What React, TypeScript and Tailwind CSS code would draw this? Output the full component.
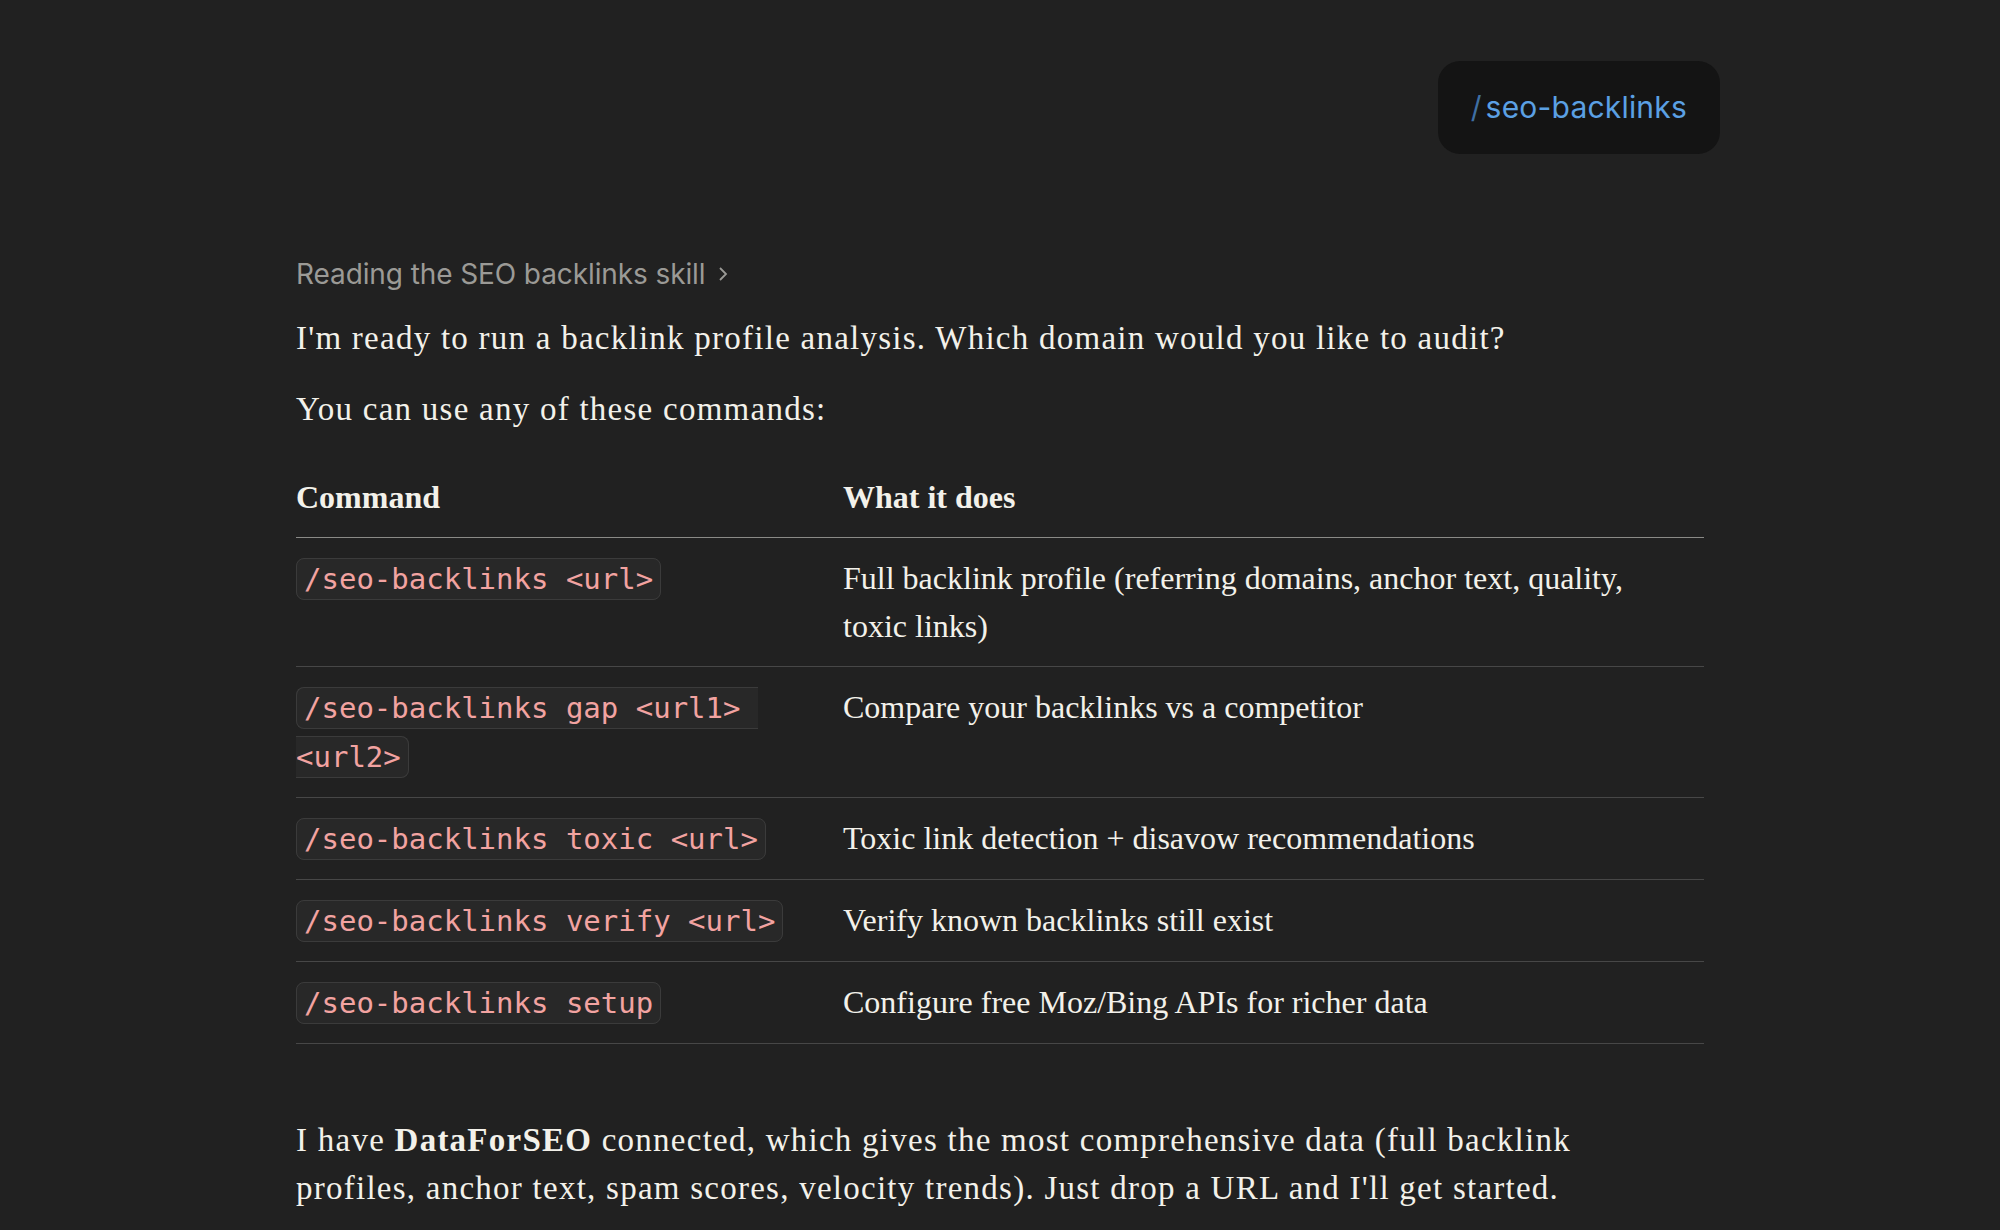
import React from "react";

const serif = { fontFamily: '"Liberation Serif", "Times New Roman", serif' };

function Code({ children }: { children: React.ReactNode }) {
  return (
    <code className="whitespace-pre-wrap rounded-[8px] border border-[#3b3b3b] bg-[#282828] px-[7px] py-[3px] font-['DejaVu_Sans_Mono',monospace] text-[29px] tracking-[0px] text-[#f2a3a1]">
      {children}
    </code>
  );
}

const rows: { cmd: string; desc: string }[] = [
  { cmd: "/seo-backlinks <url>", desc: "Full backlink profile (referring domains, anchor text, quality, toxic links)" },
  { cmd: "/seo-backlinks gap <url1> <url2>", desc: "Compare your backlinks vs a competitor" },
  { cmd: "/seo-backlinks toxic <url>", desc: "Toxic link detection + disavow recommendations" },
  { cmd: "/seo-backlinks verify <url>", desc: "Verify known backlinks still exist" },
  { cmd: "/seo-backlinks setup", desc: "Configure free Moz/Bing APIs for richer data" },
];

export default function App() {
  return (
    <div className="min-h-[1230px] w-full bg-[#212121] text-[#f3f1ea]">
      <div className="mx-auto w-[1408px] pt-[61px]">
        <div className="flex justify-end">
          <div className="mr-[-16px] flex h-[93px] items-center rounded-[22px] bg-[#141414] px-[33px] font-['Inter',sans-serif] text-[30px] text-[#5ba0e4]">
            <span className="mr-[4px] text-[#3f6fa3]">/</span>
            <span className="tracking-[0.2px]">seo-backlinks</span>
          </div>
        </div>

        <div className="mt-[100px] flex items-center gap-[11px] font-['Inter',sans-serif] text-[28px] leading-[40px] text-[#9b9a96]">
          <span className="tracking-[-0.1px]">Reading the SEO backlinks skill</span>
          <svg width="14" height="18" viewBox="0 0 14 18" fill="none" stroke="#9b9a96" strokeWidth="1.8">
            <path d="M4 3l6 6-6 6" />
          </svg>
        </div>

        <div style={serif} className="text-[33px] leading-[48px]">
          <p className="mt-[20px] tracking-[1.25px]">I'm ready to run a backlink profile analysis. Which domain would you like to audit?</p>
          <p className="mt-[23px] tracking-[1.25px]">You can use any of these commands:</p>

          <div className="mt-[24px] text-[32px]">
            <div className="grid grid-cols-[547px_1fr] border-b border-[#8a8a87] pt-[16px] pb-[16px] font-bold">
              <div>Command</div>
              <div>What it does</div>
            </div>
            {rows.map((r) => (
              <div key={r.cmd} className="grid grid-cols-[547px_1fr] border-b border-[#474747] py-[16px]">
                <div className="pr-[28px]">
                  <Code>{r.cmd}</Code>
                </div>
                <div className="pr-[40px]">{r.desc}</div>
              </div>
            ))}
          </div>

          <p className="mt-[72px] max-w-[1375px] tracking-[1.25px]">
            I have <strong className="font-bold">DataForSEO</strong> connected, which gives the most comprehensive data (full backlink profiles, anchor text, spam scores, velocity trends). Just drop a URL and I'll get started.
          </p>
        </div>
      </div>
    </div>
  );
}
